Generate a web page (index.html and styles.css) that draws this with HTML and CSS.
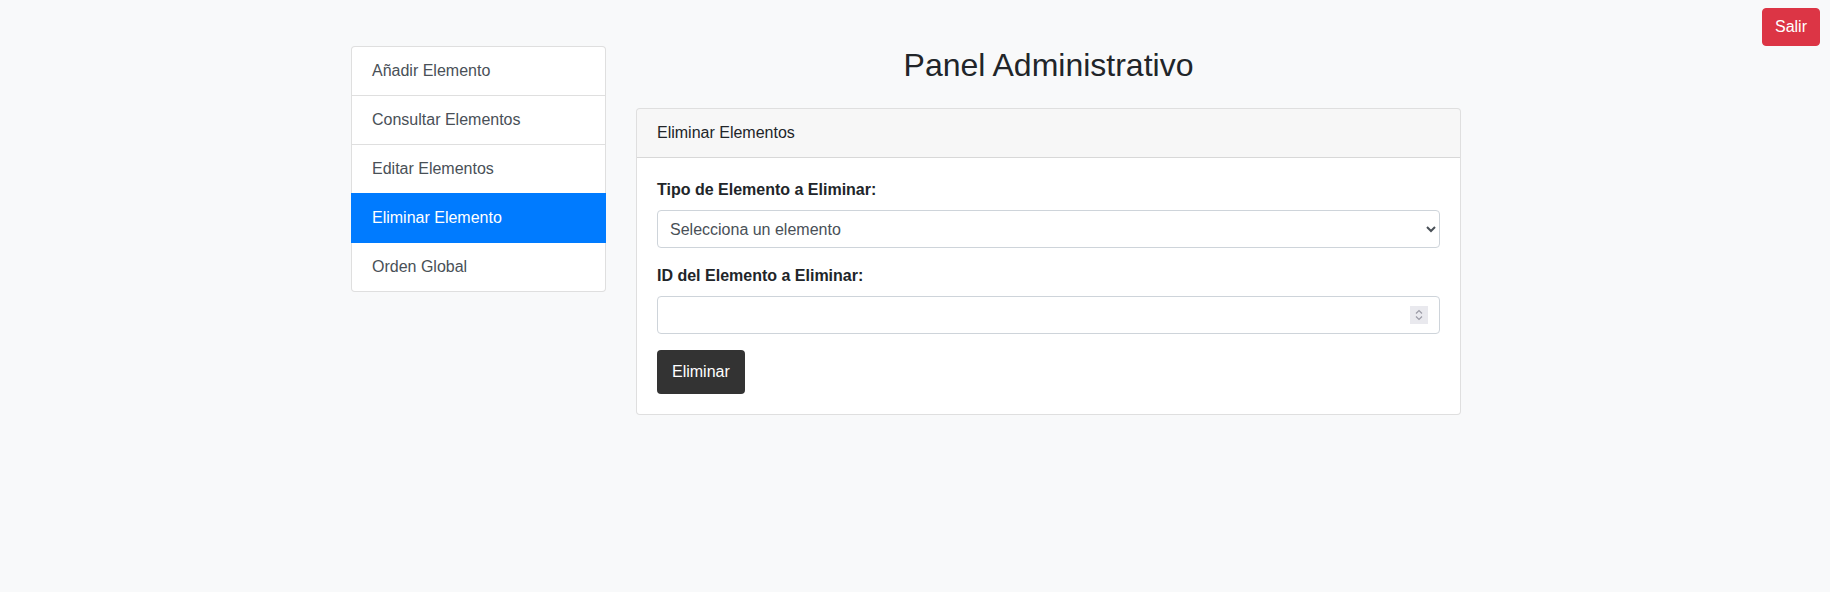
FILE: index.html
```html
<!DOCTYPE html>
<html lang="es">
<head>
<meta charset="utf-8">
<title>Panel Administrativo</title>
<link rel="stylesheet" href="styles.css">
</head>
<body>
  <header class="topbar">
    <button class="btn btn-danger" type="button">Salir</button>
  </header>
  <div class="container">
    <aside class="col-side">
      <nav class="list-group">
        <a class="list-item" href="#">Añadir Elemento</a>
        <a class="list-item" href="#">Consultar Elementos</a>
        <a class="list-item" href="#">Editar Elementos</a>
        <a class="list-item active" href="#">Eliminar Elemento</a>
        <a class="list-item" href="#">Orden Global</a>
      </nav>
    </aside>
    <main class="col-main">
      <h2 class="title">Panel Administrativo</h2>
      <section class="card">
        <div class="card-header">Eliminar Elementos</div>
        <form class="card-body">
          <div class="form-group">
            <label class="label" for="tipo">Tipo de Elemento a Eliminar:</label>
            <select id="tipo" class="form-control form-select">
              <option>Selecciona un elemento</option>
            </select>
          </div>
          <div class="form-group">
            <label class="label" for="id">ID del Elemento a Eliminar:</label>
            <div class="number-wrap">
              <input id="id" class="form-control" type="number">
              <span class="spin" aria-hidden="true">
                <svg width="10" height="14" viewBox="0 0 10 14"><path d="M2 5.5 L5 2.5 L8 5.5" fill="none" stroke="#9b9ba6" stroke-width="1.2"/><path d="M2 8.5 L5 11.5 L8 8.5" fill="none" stroke="#9b9ba6" stroke-width="1.2"/></svg>
              </span>
            </div>
          </div>
          <button class="btn-dark" type="button">Eliminar</button>
        </form>
      </section>
    </main>
  </div>
</body>
</html>
```

FILE: styles.css
```css
* { box-sizing: border-box; }

html, body {
  margin: 0;
  padding: 0;
}

body {
  background: #f8f9fa;
  font-family: "Liberation Sans", Arial, sans-serif;
  font-size: 16px;
  line-height: 1.5;
  color: #212529;
}

.topbar {
  display: flex;
  justify-content: flex-end;
  padding: 8px 10px 0 0;
}

.btn {
  font-family: inherit;
  font-size: 16px;
  line-height: 24px;
  padding: 6px 12px;
  border: 1px solid transparent;
  border-radius: 4px;
  cursor: pointer;
}

.btn-danger {
  background: #dc3545;
  border-color: #dc3545;
  color: #fff;
}

.container {
  width: 1158px;
  margin: 0 auto;
  padding-right: 18px;
  display: flex;
  align-items: flex-start;
}

.col-side {
  width: 285px;
  padding: 0 15px;
  flex: none;
}

.col-main {
  width: 855px;
  padding: 0 15px;
  flex: none;
}

.list-group {
  display: flex;
  flex-direction: column;
  border-radius: 4px;
}

.list-item {
  display: block;
  padding: 12px 20px;
  line-height: 24px;
  color: #495057;
  text-decoration: none;
  background: #fff;
  border: 1px solid rgba(0, 0, 0, 0.125);
  margin-bottom: -1px;
  position: relative;
}

.list-item:first-child {
  border-top-left-radius: 4px;
  border-top-right-radius: 4px;
}

.list-item:last-child {
  margin-bottom: 0;
  border-bottom-left-radius: 4px;
  border-bottom-right-radius: 4px;
}

.list-item.active {
  background: #007bff;
  border-color: #007bff;
  color: #fff;
  z-index: 2;
}

.title {
  margin: 0 0 24px;
  font-size: 32px;
  font-weight: 500;
  line-height: 1.2;
  text-align: center;
  color: #212529;
}

.card {
  background: #fff;
  border: 1px solid rgba(0, 0, 0, 0.125);
  border-radius: 4px;
}

.card-header {
  padding: 12px 20px;
  line-height: 24px;
  background: rgba(0, 0, 0, 0.03);
  border-bottom: 1px solid rgba(0, 0, 0, 0.125);
  border-radius: 3px 3px 0 0;
}

.card-body {
  padding: 20px;
  margin: 0;
}

.form-group {
  margin-bottom: 16px;
}

.label {
  display: block;
  font-weight: 700;
  margin-bottom: 8px;
}

.form-control {
  display: block;
  width: 100%;
  height: 38px;
  padding: 6px 12px;
  font-family: inherit;
  font-size: 16px;
  line-height: 24px;
  color: #495057;
  background: #fff;
  border: 1px solid #ced4da;
  border-radius: 4px;
  margin: 0;
}

.form-select {
  padding-left: 8px;
}

.number-wrap {
  position: relative;
}

.number-wrap input {
  -moz-appearance: textfield;
}

.number-wrap input::-webkit-inner-spin-button,
.number-wrap input::-webkit-outer-spin-button {
  -webkit-appearance: none;
  margin: 0;
}

.spin {
  position: absolute;
  top: 10px;
  right: 12px;
  width: 18px;
  height: 18px;
  background: #e9e9ee;
  display: flex;
  align-items: center;
  justify-content: center;
}

.btn-dark {
  font-family: inherit;
  font-size: 16px;
  line-height: 24px;
  padding: 10px 15px;
  border: none;
  border-radius: 4px;
  background: #333;
  color: #fff;
  cursor: pointer;
}
```
